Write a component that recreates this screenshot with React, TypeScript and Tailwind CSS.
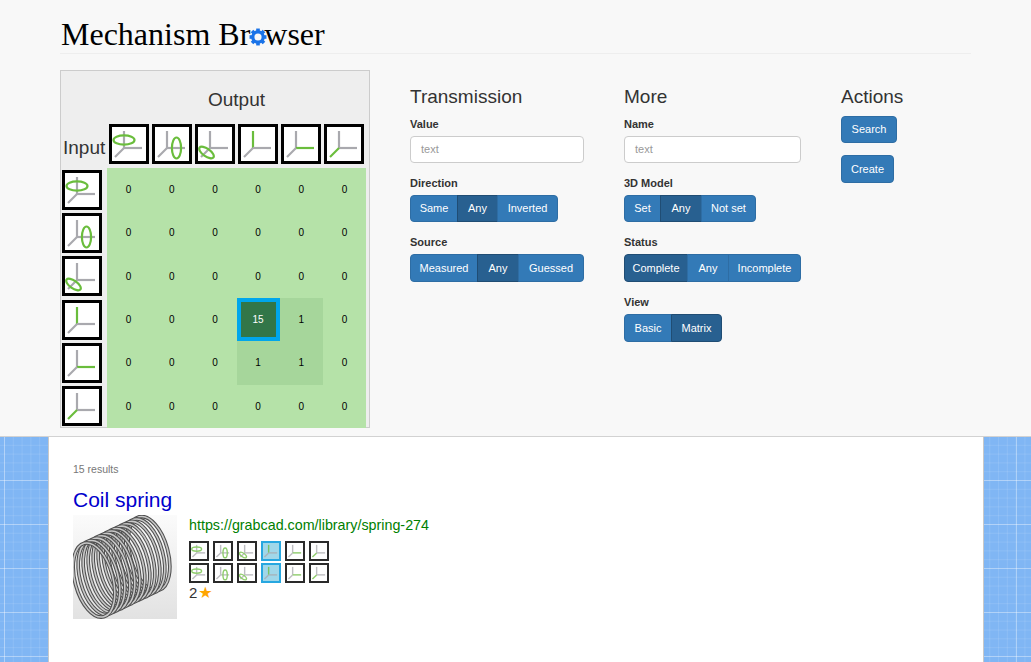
import React from "react";

const GRAY = "#a9a9ae";
const GREEN = "#6abd3c";

function Axes({ kind, sw, soft }: { kind: number; sw: number; soft?: boolean }) {
  return (
    <svg viewBox="3 3 34 34" className={soft ? "block h-full w-full opacity-75" : "block h-full w-full"} fill="none" strokeWidth={sw}>
      <path d="M15 7V24" stroke={kind === 3 ? GREEN : GRAY} />
      <path d="M15 24H33" stroke={kind === 4 ? GREEN : GRAY} />
      <path d="M15 24L6 33" stroke={kind === 5 ? GREEN : GRAY} />
      {kind === 0 && <ellipse cx="15" cy="16" rx="10.5" ry="4.6" stroke={GREEN} />}
      {kind === 1 && <ellipse cx="24.5" cy="24" rx="4.6" ry="10.5" stroke={GREEN} />}
      {kind === 2 && <ellipse cx="11.5" cy="28.5" rx="8.5" ry="3.8" transform="rotate(35 11.5 28.5)" stroke={GREEN} />}
    </svg>
  );
}

function BigIcon({ kind }: { kind: number }) {
  return (
    <div className="h-10 w-10 shrink-0 border-[3px] border-black bg-white">
      <Axes kind={kind} sw={2.2} />
    </div>
  );
}

function SmallIcon({ kind, on }: { kind: number; on?: boolean }) {
  return (
    <div className={on ? "h-5 w-5 border-2 border-[#27a7e0] bg-[#a0d7e9]" : "h-5 w-5 border-2 border-[#2a2a2a] bg-white"}>
      <Axes kind={kind} sw={3} soft />
    </div>
  );
}

function Seg({ items, active, h }: { items: [string, string][]; active: number; h: string }) {
  return (
    <div className={`flex w-max ${h}`}>
      {items.map(([t, w], i) => (
        <div
          key={t}
          className={
            w +
            " flex items-center justify-center border text-[11px] text-white " +
            (i === active ? "border-[#204d74] bg-[#286090] " : "border-[#2e6da4] bg-[#337ab7] ") +
            (i > 0 ? "-ml-px " : "") +
            (i === 0 ? "rounded-l-[4px] " : "") +
            (i === items.length - 1 ? "rounded-r-[4px]" : "")
          }
        >
          {t}
        </div>
      ))}
    </div>
  );
}

function Field({ label, children }: { label: string; children: React.ReactNode }) {
  return (
    <div className="mb-3">
      <div className="mb-1 h-4 text-[11px] font-bold leading-4 text-[#333333]">{label}</div>
      {children}
    </div>
  );
}

function TextInput() {
  return (
    <div className="flex h-[27px] items-center rounded-[4px] border border-[#cccccc] bg-white px-[10px] text-[11px] text-[#999999]">
      text
    </div>
  );
}

function Heading({ children }: { children: React.ReactNode }) {
  return <div className="mb-2 h-[22px] text-[19px] leading-[22px] text-[#333333]">{children}</div>;
}

function Gear() {
  const teeth = [0, 45, 90, 135, 180, 225, 270, 315];
  return (
    <svg viewBox="0 0 20 20" className="ml-[-1.5px] mr-[-2.5px] inline-block h-[18px] w-[18px] align-[-1px]">
      <circle cx="10" cy="10" r="5.8" fill="none" stroke="#1a73e8" strokeWidth="3.6" />
      {teeth.map((a) => (
        <rect key={a} x="8" y="0.6" width="4" height="4" fill="#1a73e8" transform={`rotate(${a} 10 10)`} />
      ))}
    </svg>
  );
}

function Coil() {
  const rings = Array.from({ length: 12 }, (_, i) => 11 - i);
  return (
    <svg viewBox="0 0 104 104" className="block h-[104px] w-[104px] bg-linear-to-b from-[#fbfbfb] to-[#e2e2e2]">
      {rings.map((i) => {
        const cx = 21 + i * 5;
        const cy = 65 - i * 2.4;
        return (
          <g key={i} transform={`rotate(-15 ${cx} ${cy})`} fill="none">
            <ellipse cx={cx} cy={cy} rx="19" ry="38" stroke="#505050" strokeWidth="3.7" />
            <ellipse cx={cx} cy={cy} rx="19" ry="38" stroke="#c8c8c8" strokeWidth="1.6" />
          </g>
        );
      })}
    </svg>
  );
}

const matrix = [
  [0, 0, 0, 0, 0, 0],
  [0, 0, 0, 0, 0, 0],
  [0, 0, 0, 0, 0, 0],
  [0, 0, 0, 15, 1, 0],
  [0, 0, 0, 1, 1, 0],
  [0, 0, 0, 0, 0, 0],
];

export default function App() {
  const kinds = [0, 1, 2, 3, 4, 5];
  return (
    <div className="h-[662px] overflow-hidden bg-[#f8f8f8] font-['Liberation_Sans',Arial,sans-serif] text-[#333333]">
      <div className="h-[437px] border-b border-[#d2d2d2] px-[60px]">
        <div className="h-[54px] border-b border-[#eeeeee] pl-px pt-[16px] font-['Liberation_Serif','Times_New_Roman',serif] text-[32px] leading-[37px] text-black">
          Mechanism Br
          <Gear />
          wser
        </div>
        <div className="mt-4 flex">
          <div className="h-[358px] w-[310px] shrink-0 border border-[#cccccc] bg-[#eeeeee]">
            <div className="ml-[46px] flex h-[53px] w-[259px] items-center justify-center pt-[5px] text-[19px]">Output</div>
            <div className="mb-1 grid h-10 w-[305px] grid-cols-[46px_repeat(6,1fr)]">
              <div className="flex items-end pb-[4px] pl-[2px] text-[19px] leading-[24px]">Input</div>
              {kinds.map((k) => (
                <div key={k} className="flex justify-center">
                  <BigIcon kind={k} />
                </div>
              ))}
            </div>
            <div className="grid h-[260px] w-[305px] grid-cols-[46px_repeat(6,1fr)] grid-rows-6">
              {matrix.map((row, r) => (
                <React.Fragment key={r}>
                  <div className="flex items-center pl-px">
                    <BigIcon kind={r} />
                  </div>
                  {row.map((v, c) => (
                    <div
                      key={c}
                      className={
                        "flex items-center justify-center text-[10px] " +
                        (v === 15
                          ? "border-4 border-[#00a6eb] bg-[#327648] text-[10.5px] text-white"
                          : v === 1
                            ? "bg-[#a6d69b] text-black"
                            : "bg-[#b5e2a8] text-black")
                      }
                    >
                      {v}
                    </div>
                  ))}
                </React.Fragment>
              ))}
            </div>
          </div>
          <div className="ml-10 flex pt-4">
            <div className="w-[174px]">
              <Heading>Transmission</Heading>
              <Field label="Value">
                <TextInput />
              </Field>
              <Field label="Direction">
                <Seg items={[["Same", "w-[48px]"], ["Any", "w-[41px]"], ["Inverted", "w-[61px]"]]} active={1} h="h-[27px]" />
              </Field>
              <Field label="Source">
                <Seg items={[["Measured", "w-[68px]"], ["Any", "w-[42px]"], ["Guessed", "w-[66px]"]]} active={1} h="h-[28px]" />
              </Field>
            </div>
            <div className="ml-10 w-[177px]">
              <Heading>More</Heading>
              <Field label="Name">
                <TextInput />
              </Field>
              <Field label="3D Model">
                <Seg items={[["Set", "w-[37px]"], ["Any", "w-[42px]"], ["Not set", "w-[55px]"]]} active={1} h="h-[27px]" />
              </Field>
              <Field label="Status">
                <Seg items={[["Complete", "w-[64px]"], ["Any", "w-[42px]"], ["Incomplete", "w-[73px]"]]} active={0} h="h-[28px]" />
              </Field>
              <Field label="View">
                <Seg items={[["Basic", "w-[48px]"], ["Matrix", "w-[51px]"]]} active={1} h="h-[28px]" />
              </Field>
            </div>
            <div className="ml-10">
              <Heading>Actions</Heading>
              <div className="flex h-[27px] w-[56px] items-center justify-center rounded-[4px] border border-[#2e6da4] bg-[#337ab7] text-[11px] text-white">
                Search
              </div>
              <div className="mt-3 flex h-[28px] w-[53px] items-center justify-center rounded-[4px] border border-[#2e6da4] bg-[#337ab7] text-[11px] text-white">
                Create
              </div>
            </div>
          </div>
        </div>
      </div>
      <div className="h-[225px] bg-[#80b6f4] bg-[linear-gradient(rgba(255,255,255,0.32)_1px,transparent_1px),linear-gradient(90deg,rgba(255,255,255,0.32)_1px,transparent_1px),linear-gradient(rgba(255,255,255,0.1)_1px,transparent_1px),linear-gradient(90deg,rgba(255,255,255,0.1)_1px,transparent_1px)] bg-[size:44px_44px,44px_44px,8.8px_8.8px,8.8px_8.8px] bg-[position:4px_43px]">
        <div className="ml-[48px] h-full w-[936px] border-x border-[#c8c8c8] bg-white pl-6 pt-6">
          <div className="h-4 text-[10.5px] leading-4 text-[#777777]">15 results</div>
          <div className="mb-[2px] mt-[10px] h-[26px] text-[21px] leading-[26px] text-[#0000cc]">Coil spring</div>
          <div className="flex">
            <Coil />
            <div className="ml-3">
              <div className="h-[20px] text-[14.3px] leading-[20px] text-[#008000]">https://grabcad.com/library/spring-274</div>
              <div className="mt-[6px] flex flex-col gap-[2px]">
                {[0, 1].map((r) => (
                  <div key={r} className="flex gap-1">
                    {kinds.map((k) => (
                      <SmallIcon key={k} kind={k} on={k === 3} />
                    ))}
                  </div>
                ))}
              </div>
              <div className="flex h-5 items-center text-[15px] leading-5 text-[#333333]">
                2<span className="ml-px font-['DejaVu_Sans',sans-serif] text-[16px] text-[#ffa500]">★</span>
              </div>
            </div>
          </div>
        </div>
      </div>
    </div>
  );
}
